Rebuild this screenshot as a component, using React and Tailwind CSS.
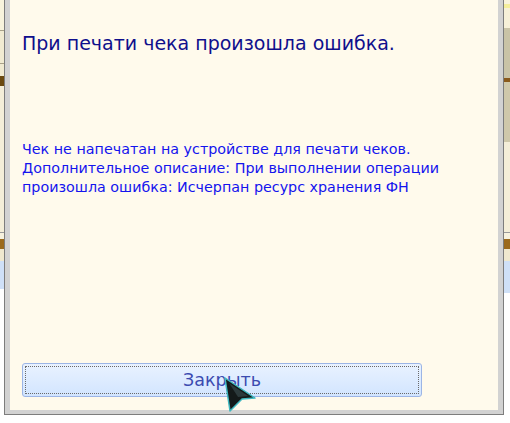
export default function App() {
  return (
    <div className="relative w-[510px] h-[423px] overflow-hidden bg-white flex" style={{ fontFamily: '"DejaVu Sans", Verdana, sans-serif' }}>
      {/* left background strip */}
      <div className="w-[4px] flex flex-col shrink-0">
        <div className="h-[30px] bg-[#f8f3dc]" />
        <div className="h-px bg-[#a9a28a]" />
        <div className="h-[32px] bg-[#f1ebd2]" />
        <div className="h-px bg-[#a9a28a]" />
        <div className="h-[12px] bg-[#f1ebd2]" />
        <div className="h-[10px] bg-[#6b4a10]" />
        <div className="h-[146px] bg-[#f4eed8]" />
        <div className="h-px bg-[#9a9a9a]" />
        <div className="h-[6px] bg-[#f7f2de]" />
        <div className="h-[10px] bg-[#9b6a1c]" />
        <div className="h-[12px] bg-[#efe8cf]" />
        <div className="h-[28px] bg-[#cfe0f7]" />
        <div className="flex-1 bg-white" />
      </div>

      {/* dialog window */}
      <div className="w-[500px] h-[415px] shrink-0 border-x border-b border-[#7d7d7d] bg-[#d2d2d2] px-[5px] pb-[4px] flex">
        <div className="flex-1 bg-[#fffaec] flex flex-col px-[12px]">
          <div className="pt-[31px] text-[19px] leading-[24px] text-[#0f0f8c]">
            При печати чека произошла ошибка.
          </div>
          <div className="pt-[85px] text-[14.3px] leading-[19px] text-[#1414ee]">
            <div>Чек не напечатан на устройстве для печати чеков.</div>
            <div>Дополнительное описание: При выполнении операции</div>
            <div>произошла ошибка: Исчерпан ресурс хранения ФН</div>
          </div>
          <div className="flex-1" />
          <button className="mb-[13px] w-[400px] h-[34px] rounded-[3px] border border-[#9cb5e6] bg-gradient-to-b from-[#e9f2ff] to-[#d2e5ff] p-[2px]">
            <div className="w-full h-full border border-dotted border-[#6a6a6a] flex items-center justify-center text-[17.5px] text-[#3b4bb0]">
              Закрыть
            </div>
          </button>
        </div>
      </div>

      {/* right background strip */}
      <div className="flex-1 flex flex-col">
        <div className="h-[4px] bg-[#f8f3dc]" />
        <div className="h-[4px] bg-[#f4ee9c]" />
        <div className="h-[20px] bg-[#f6f0d8]" />
        <div className="h-[50px] bg-[#c9c3a6]" />
        <div className="h-[4px] bg-[#8a5a1c]" />
        <div className="h-[60px] bg-[#cfc8aa]" />
        <div className="h-[90px] bg-[#f4eed8]" />
        <div className="h-px bg-[#9a9a9a]" />
        <div className="h-[6px] bg-[#f7f2de]" />
        <div className="h-[10px] bg-[#9b6a1c]" />
        <div className="h-[12px] bg-[#efe8cf]" />
        <div className="h-[32px] bg-[#cfe0f7]" />
        <div className="flex-1 bg-white" />
      </div>

      {/* mouse cursor */}
      <svg className="absolute left-[224px] top-[377px]" width="34" height="36" viewBox="0 0 34 36">
        <polygon points="1,1 31,21 18,22 6,34" fill="#141a1a" stroke="#3fb8c0" strokeWidth="1.5" strokeLinejoin="round" />
        <polygon points="5,6 24,19 14,20" fill="#2c3a3c" />
      </svg>
    </div>
  );
}
